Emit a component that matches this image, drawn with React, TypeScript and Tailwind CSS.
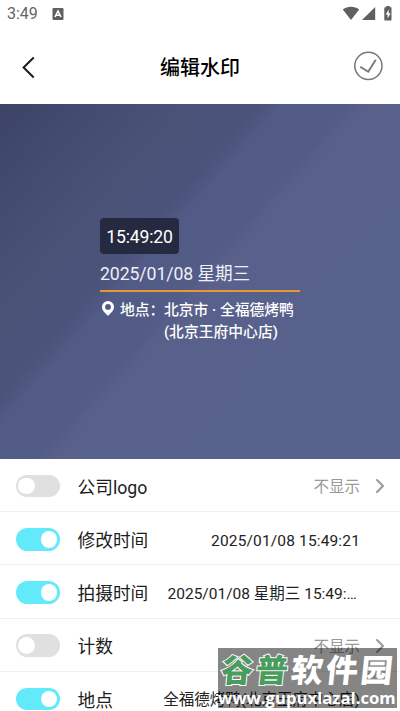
import { ChevronRight } from 'lucide-react';

interface SettingRow {
  label: string;
  value: string;
  enabled: boolean;
  valueClass?: string;
}

const rows: SettingRow[] = [
  { label: '公司logo', value: '不显示', enabled: false },
  { label: '修改时间', value: '2025/01/08 15:49:21', enabled: true, valueClass: 'tracking-[0.15px]' },
  { label: '拍摄时间', value: '2025/01/08 星期三 15:49:21', enabled: true, valueClass: 'w-[192.5px]' },
  { label: '计数', value: '不显示', enabled: false },
  { label: '地点', value: '全福德烤鸭(北京王府中心店)', enabled: true },
];

function StatusBar() {
  return (
    <div className="h-7 flex items-center justify-between pl-[7px] pr-1.5 text-[#666]">
      <div className="flex items-center gap-3.5">
        <span className="text-[16px] leading-7">3:49</span>
        <svg width="12" height="12" viewBox="0 0 12 12">
          <rect x="0.5" y="0" width="11" height="12" rx="1.2" fill="#606060" />
          <path d="M3 9 6 3 9 9M4.2 7.2h3.6" fill="none" stroke="#fff" strokeWidth="1.6" />
        </svg>
      </div>
      <svg width="52" height="16" viewBox="0 0 52 16" fill="#606060">
        <path d="M0.8 3.4C5.6-.3 12.4-.3 17.2 3.4L9 14Z" />
        <path d="M33.2 1v13H20Z" />
        <path d="M43 1.2h1.2V0h3.6v1.2h1.2q.5 0 .5.6v12q0 .7-.6.7h-6q-.6 0-.6-.7v-12q0-.6.7-.6Z" />
        <path d="M46.7 3.4 43.7 8.4h1.9v4l3-5.2h-1.9Z" fill="#fff" />
      </svg>
    </div>
  );
}

function Header() {
  return (
    <div className="h-[76px] flex items-center justify-between px-4">
      <svg width="28" height="28" viewBox="0 0 28 28" fill="none" stroke="#1c1c1c" strokeWidth="2" className="mt-0.5">
        <path d="M17.7 4.5 7.6 14.5l10.1 10" />
      </svg>
      <h1 className="text-[20px] font-medium text-black pl-1 pt-1">编辑水印</h1>
      <svg width="32" height="32" viewBox="0 0 32 32" fill="none" stroke="#777" strokeWidth="1.5">
        <circle cx="16.4" cy="15.8" r="13.6" />
        <path d="m8.2 16.7 8 5 7.6-12" strokeWidth="1.9" />
      </svg>
    </div>
  );
}

function Preview() {
  return (
    <div className="h-[355px] flex justify-center text-white bg-[linear-gradient(131.5deg,#3c4367_0%,#434b70_13%,#4a5278_26%,#4b537a_36%,#525a86_40%,#535c87_49%,#59618b_52%,#57618c_60%,#57638c_100%)]">
      <div className="w-[200px] pt-[114px]">
        <div className="w-[79px] h-9 rounded bg-[#262a40] flex items-center justify-center pt-[3px] text-[17.6px] tracking-[-0.15px]">15:49:20</div>
        <div className="h-[38px] flex items-center pt-1 text-[17.7px] tracking-[-0.1px] border-b-2 border-[#e39a35] text-[#eef0f8]">2025/01/08 星期三</div>
        <div className="flex pt-2 text-[14.8px] leading-[21.5px] font-medium">
          <svg width="12" height="15" viewBox="0 0 12 15" className="ml-[2px] mr-[6px] mt-px shrink-0">
            <path fillRule="evenodd" fill="#fff" d="M6 0a6 6 0 0 0-6 6c0 3.8 3.8 6.6 6 9 2.2-2.4 6-5.2 6-9A6 6 0 0 0 6 0Zm0 3a2.9 2.9 0 1 1 0 5.8A2.9 2.9 0 0 1 6 3Z" />
          </svg>
          <span className="w-11 whitespace-nowrap">地点：</span>
          <span className="whitespace-nowrap">北京市 · 全福德烤鸭<br />(北京王府中心店)</span>
        </div>
      </div>
    </div>
  );
}

function Toggle({ on }: { on: boolean }) {
  return (
    <div className={`w-[44.5px] h-[22.5px] rounded-full flex items-center px-[2.8px] shrink-0 ${on ? 'bg-[#62eafa] justify-end' : 'bg-[#e0e0e0] justify-start'}`}>
      <div className="size-[16.5px] rounded-full bg-white" />
    </div>
  );
}

function Row({ label, value, enabled, valueClass = '' }: SettingRow) {
  return (
    <div className="h-[53.2px] flex items-center border-b border-[#f1f1f1] pt-0.5 pl-[15.5px] pr-2 shrink-0">
      <Toggle on={enabled} />
      <span className="ml-[17.5px] pt-1 text-[17.7px] text-[#1c1c1c] whitespace-nowrap">{label}</span>
      <span className={`ml-auto pt-1 truncate text-[15.5px] ${valueClass} ${enabled ? 'text-[#222]' : 'text-[#999]'}`}>{value}</span>
      {enabled ? <span className="w-8 shrink-0" /> : <ChevronRight size={24} strokeWidth={2} className="ml-2 shrink-0 text-[#999]" />}
    </div>
  );
}

function SiteBadge() {
  return (
    <div className="absolute left-[218px] top-[648px] w-[179px] h-[60px] bg-black/48 text-white">
      <div className="pt-[6px] pl-[3px] text-[32px] leading-[35px] tracking-[2.8px] font-black whitespace-nowrap flex">
        <span className="-skew-x-6 text-[#4a9b5e] [-webkit-text-stroke:2px_white] [paint-order:stroke_fill]">谷普</span>
        <span className="-skew-x-6">软件园</span>
      </div>
      <div className="text-[16.7px] leading-[18px] font-bold font-['Open_Sans',sans-serif] whitespace-nowrap">www.gupuxlazal.com</div>
    </div>
  );
}

export default function App() {
  return (
    <div className="relative w-[400px] h-[711px] overflow-hidden bg-white font-['Roboto','Noto_Sans_CJK_SC',sans-serif]">
      <StatusBar />
      <Header />
      <Preview />
      <div className="flex flex-col">
        {rows.map(row => <Row key={row.label} {...row} />)}
      </div>
      <SiteBadge />
    </div>
  );
}
